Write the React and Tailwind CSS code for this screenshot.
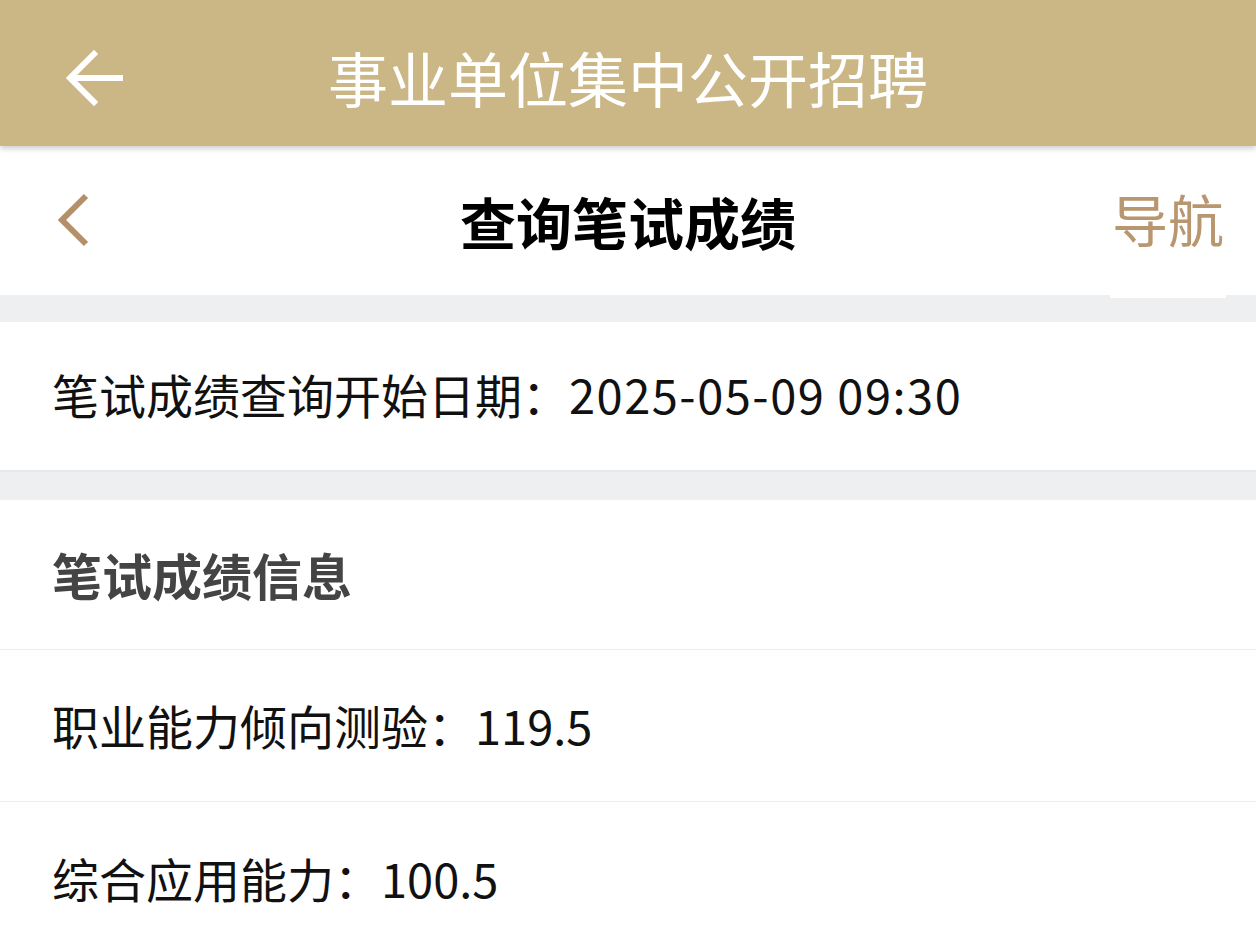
import React from "react";

const font = { fontFamily: '"Noto Sans CJK SC", "Noto Sans", sans-serif' };

const BackArrow = () => (
  <svg width="60" height="60" viewBox="0 0 60 60" fill="none">
    <path d="M56 30H8M30 6L6 30l24 24" stroke="white" strokeWidth="6" strokeLinecap="square" />
  </svg>
);

const Chevron = () => (
  <svg width="40" height="60" viewBox="0 0 40 60" fill="none">
    <path d="M32 6L8 30l24 24" stroke="#b48f68" strokeWidth="6" />
  </svg>
);

const Row = ({ label, value, last }) => (
  <div
    className={
      "h-[152px] flex items-center px-[52px] text-[47px] text-[#111] " +
      (last ? "" : "border-b border-[#ececec]")
    }
  >
    <span>{label}：</span>
    <span>{value}</span>
  </div>
);

export default function App() {
  return (
    <div className="w-[1256px] h-[938px] overflow-hidden bg-[#eeeff0]" style={font}>
      {/* app bar */}
      <div className="relative z-10 h-[146px] bg-[#cbb686] flex items-center pt-[8px] shadow-[0_3px_5px_rgba(0,0,0,0.18)]">
        <div className="absolute left-[64px] top-[48px]">
          <BackArrow />
        </div>
        <div className="w-full text-center text-white text-[60px] leading-none">
          事业单位集中公开招聘
        </div>
      </div>

      {/* page header */}
      <div className="relative h-[149px] bg-white flex items-center justify-center">
        <div className="absolute left-[54px] top-[44px]">
          <Chevron />
        </div>
        <div className="text-[56px] font-bold text-black leading-none">查询笔试成绩</div>
        <div className="absolute right-[32px] top-[44px] text-[56px] leading-none text-[#b8966f]">导航</div>
      </div>
      <div className="h-[27px] flex justify-end pr-[30px]">
        <div className="w-[116px] h-[3px] bg-white" />
      </div>

      {/* start date */}
      <div className="h-[148px] bg-white flex items-center px-[52px] pb-[4px] text-[47px] text-[#111]">
        <span>笔试成绩查询开始日期：</span>
        <span className="tracking-[1.5px]">2025-05-09 09:30</span>
      </div>
      <div className="h-[30px] border-t-2 border-[#e7e8e9]" />

      {/* score info */}
      <div className="bg-white">
        <div className="h-[150px] flex items-center px-[52px] text-[50px] font-bold text-[#444] border-b border-[#ececec]">
          笔试成绩信息
        </div>
        <Row label="职业能力倾向测验" value="119.5" />
        <Row label="综合应用能力" value="100.5" last />
      </div>
    </div>
  );
}
